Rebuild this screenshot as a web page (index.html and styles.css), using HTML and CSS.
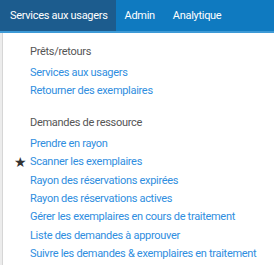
FILE: index.html
```html
<!DOCTYPE html>
<html>
<head>
<meta charset="utf-8">
<link rel="stylesheet" href="styles.css">
</head>
<body>
<nav class="navbar">
  <a class="tab active">Services aux usagers</a>
  <a class="tab">Admin</a>
  <a class="tab">Analytique</a>
</nav>
<div class="page">
  <div class="side"></div>
  <div class="menu">
    <div class="header">Prêts/retours</div>
    <a class="item">Services aux usagers</a>
    <a class="item">Retourner des exemplaires</a>
    <div class="header second">Demandes de ressource</div>
    <a class="item">Prendre en rayon</a>
    <a class="item starred"><span class="star">★</span>Scanner les exemplaires</a>
    <a class="item">Rayon des réservations expirées</a>
    <a class="item">Rayon des réservations actives</a>
    <a class="item">Gérer les exemplaires en cours de traitement</a>
    <a class="item">Liste des demandes à approuver</a>
    <a class="item">Suivre les demandes &amp; exemplaires en traitement</a>
  </div>
</div>
</body>
</html>
```
FILE: styles.css
```css
html, body {
  margin: 0;
  padding: 0;
  background: #fff;
  font-family: Roboto, "Liberation Sans", sans-serif;
  overflow: hidden;
}
.navbar {
  display: flex;
  height: 31px;
  background: #0f7ac0;
  border-bottom: 2px solid #3d9ad6;
}
.tab {
  display: flex;
  align-items: center;
  padding: 0 9px;
  color: #fff;
  font-size: 11px;
  letter-spacing: -0.3px;
}
.tab.active {
  background: #1c5c8e;
  padding-left: 10px;
  padding-right: 8px;
}
.page {
  display: flex;
}
.side {
  width: 2px;
  background: #ececec;
  border-right: 1px solid #d6d6d6;
  height: 240px;
}
.menu {
  display: flex;
  flex-direction: column;
  padding: 10px 0 0 27px;
}
.header {
  color: #555;
  font-size: 11px;
  letter-spacing: -0.3px;
  line-height: 18px;
  margin-bottom: 3px;
}
.header.second {
  margin-top: 13px;
}
.item {
  position: relative;
  color: #2f8ee0;
  font-size: 11px;
  letter-spacing: -0.3px;
  line-height: 18.4px;
}
.star {
  position: absolute;
  left: -16px;
  color: #333;
  font-size: 14px;
  letter-spacing: 0;
}
```
